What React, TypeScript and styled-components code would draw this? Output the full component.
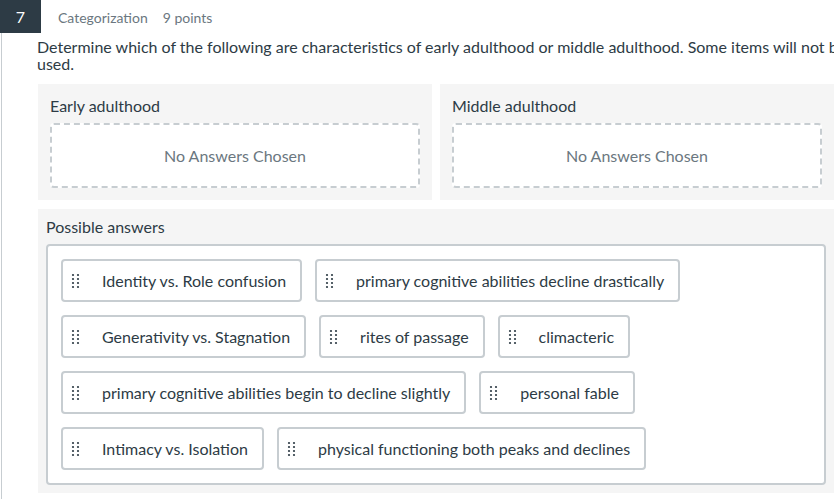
import React from "react";
import styled, { createGlobalStyle } from "styled-components";

const Global = createGlobalStyle`
  html, body { margin: 0; padding: 0; background: #fff; overflow: hidden; }
  body { font-family: Lato, "Open Sans", "Liberation Sans", sans-serif; color: #2d3b45; }
`;

const Page = styled.div`
  position: relative;
  width: 900px;
  min-height: 499px;
  margin-left: 1px;
  border-left: 1px solid #c7cdd1;
  padding: 0 0 0 35px;
  box-sizing: border-box;
`;

const Badge = styled.div`
  position: absolute;
  left: -2px;
  top: 0;
  width: 41px;
  height: 33px;
  background: #2d3b45;
  color: #fff;
  font-size: 16px;
  display: flex;
  align-items: center;
  justify-content: center;
`;

const Header = styled.div`
  height: 33px;
  display: flex;
  align-items: center;
  gap: 15px;
  padding: 2px 0 0 21px;
  box-sizing: border-box;
  font-size: 14px;
  color: #6b7780;
`;

const Prompt = styled.p`
  margin: 5px 0 12px 0;
  font-size: 16px;
  line-height: 17px;
  width: 822px;
`;

const Categories = styled.div`
  display: grid;
  grid-template-columns: 394px 394px;
  gap: 8px;
  margin-left: 1px;
`;

const Category = styled.div`
  background: #f5f5f5;
  padding: 12px;
`;

const Title = styled.div`
  font-size: 16px;
  line-height: 20px;
  margin-bottom: 7px;
`;

const Drop = styled.div`
  height: 65px;
  border: 2px dashed #c7cdd1;
  border-radius: 4px;
  box-sizing: border-box;
  background: #fff;
  display: flex;
  align-items: center;
  justify-content: center;
  font-size: 16px;
  color: #6b7780;
`;

const Bank = styled.div`
  margin: 9px 0 0 1px;
  width: 796px;
  background: #f5f5f5;
  padding: 8px;
  box-sizing: border-box;
`;

const BankLabel = styled.div`
  font-size: 16px;
  line-height: 20px;
  margin-bottom: 7px;
`;

const Pool = styled.div`
  background: #fff;
  border: 2px solid #c7cdd1;
  border-radius: 4px;
  padding: 13px 13px 0 13px;
  display: flex;
  flex-direction: column;
`;

const Row = styled.div`
  display: flex;
  gap: 13px;
`;

const Chip = styled.div`
  height: 43px;
  box-sizing: border-box;
  border: 2px solid #c7cdd1;
  border-radius: 4px;
  display: flex;
  align-items: center;
  padding: 0 14px 0 7px;
  margin-bottom: 13px;
  font-size: 16px;
  white-space: nowrap;
`;

const Grip = styled.svg`
  width: 12px;
  height: 16px;
  margin-right: 20px;
  flex: none;
`;

const Handle = () => (
  <Grip viewBox="0 0 12 16">
    {[0, 1, 2, 3].map((r) =>
      [3, 8].map((c) => <circle key={`${r}-${c}`} cx={c} cy={2 + r * 4} r={1.1} fill="#2d3b45" />)
    )}
  </Grip>
);

const answers = [
  ["Identity vs. Role confusion", "primary cognitive abilities decline drastically"],
  ["Generativity vs. Stagnation", "rites of passage", "climacteric"],
  ["primary cognitive abilities begin to decline slightly", "personal fable"],
  ["Intimacy vs. Isolation", "physical functioning both peaks and declines"],
];

export default function App() {
  return (
    <>
      <Global />
      <Page>
        <Badge>7</Badge>
        <Header>
          <span>Categorization</span>
          <span>9 points</span>
        </Header>
        <Prompt>
          Determine which of the following are characteristics of early adulthood or middle adulthood. Some items will not be used.
        </Prompt>
        <Categories>
          <Category>
            <Title>Early adulthood</Title>
            <Drop>No Answers Chosen</Drop>
          </Category>
          <Category>
            <Title>Middle adulthood</Title>
            <Drop>No Answers Chosen</Drop>
          </Category>
        </Categories>
        <Bank>
          <BankLabel>Possible answers</BankLabel>
          <Pool>
            {answers.map((row, i) => (
              <Row key={i}>
                {row.map((a) => (
                  <Chip key={a}>
                    <Handle />
                    {a}
                  </Chip>
                ))}
              </Row>
            ))}
          </Pool>
        </Bank>
      </Page>
    </>
  );
}
